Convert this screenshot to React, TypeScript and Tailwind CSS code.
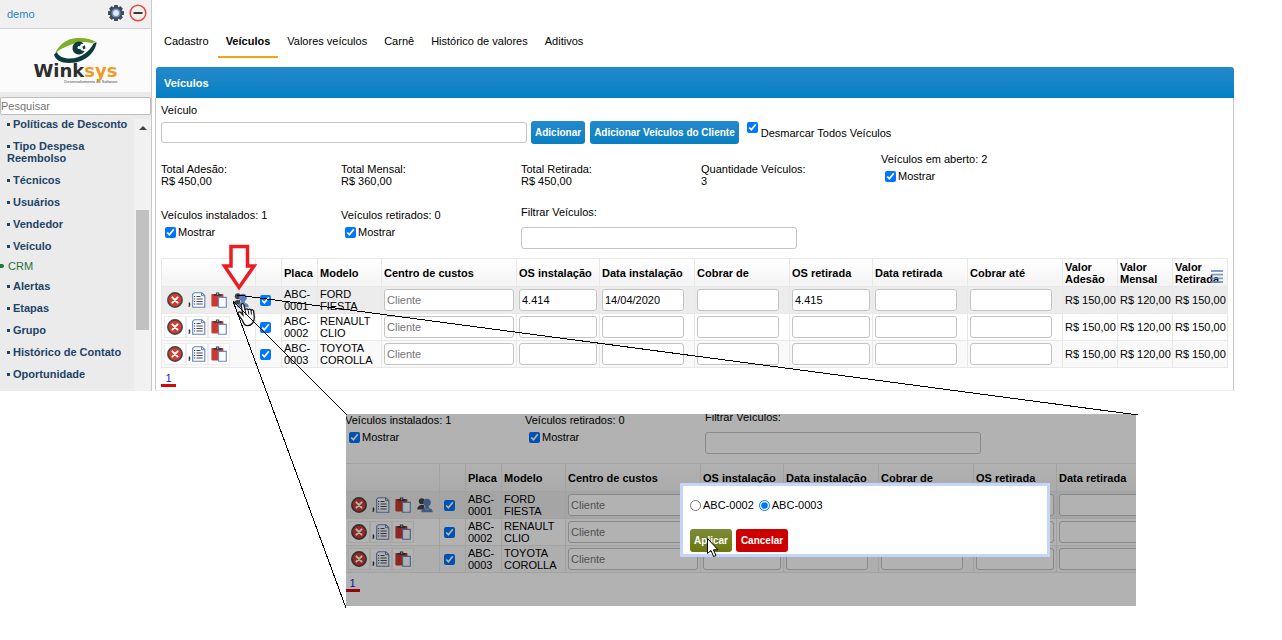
import React from "react";

type Vehicle = {
  plate: string;
  model: string;
  osInstall?: string;
  dateInstall?: string;
  osRemove?: string;
};

const vehicles: Vehicle[] = [
  { plate: "ABC-0001", model: "FORD FIESTA", osInstall: "4.414", dateInstall: "14/04/2020", osRemove: "4.415" },
  { plate: "ABC-0002", model: "RENAULT CLIO" },
  { plate: "ABC-0003", model: "TOYOTA COROLLA" },
];

const tabs = ["Cadastro", "Veículos", "Valores veículos", "Carnê", "Histórico de valores", "Aditivos"];

const menuTop = ["Políticas de Desconto", "Tipo Despesa Reembolso", "Técnicos", "Usuários", "Vendedor", "Veículo"];
const menuCrm = ["Alertas", "Etapas", "Grupo", "Histórico de Contato", "Oportunidade"];

function GearIcon() {
  return (
    <svg viewBox="0 0 16 16" className="size-4" aria-hidden="true">
      <g fill="#414a58">
        <circle cx="8" cy="8" r="6.4" />
        {[0, 45, 90, 135].map((a) => (
          <rect key={a} x="6" y="0" width="4" height="16" rx="0.4" transform={`rotate(${a} 8 8)`} />
        ))}
      </g>
      <circle cx="8" cy="8" r="4.6" fill="#6f8fc4" />
      <circle cx="8" cy="8" r="2.9" fill="#e3ebf9" />
    </svg>
  );
}

function MinusIcon() {
  return (
    <svg viewBox="0 0 18 18" className="size-[18px]" aria-hidden="true">
      <circle cx="9" cy="9" r="7.8" fill="#f6efee" stroke="#dc4a40" strokeWidth="1.5" />
      <rect x="4.5" y="8" width="9" height="2" fill="#3b3b3b" />
    </svg>
  );
}

function EyeLogo() {
  return (
    <svg viewBox="0 0 44 28" className="h-7 w-11" aria-hidden="true">
      <path d="M1 16.500C5 7.500 13 1.500 23 1c8-.4 14 1 19 4-2 .2-3 .6-3.600 1.400C33 4.500 25 4.200 18 7.200 11 10 6 12 1 16.500Z" fill="#7fae2a" />
      <path d="M42.500 5C42.500 12 34 26 15 26 7 26 1 22.500 0 17.500l3-2.500c1 4 6 6.500 13 6.500C27 21.500 36 14 39.500 6.500Z" fill="#0d3a3a" />
      <path d="M29.500 6.500a6.500 6.500 0 1 0 1.200 7.500l-3.200-.6-2-2.400 1-3.600Z" fill="#0d3a3a" />
      <path d="M28.300 9.800l2.600-1.600.6 3.200-2.200.8Z" fill="#0d3a3a" />
      <circle cx="25" cy="10.500" r="1.500" fill="#fbfbfb" />
    </svg>
  );
}

function DeleteIcon() {
  return (
    <svg viewBox="0 0 16 16" className="size-4" aria-hidden="true">
      <circle cx="8" cy="8" r="7.100" fill="#d63a2e" stroke="#4a4444" strokeWidth="1.700" />
      <path d="M5.400 5.400l5.200 5.200M10.600 5.400l-5.200 5.200" stroke="#fff" strokeWidth="2" strokeLinecap="round" />
    </svg>
  );
}

function ListIcon() {
  return (
    <svg viewBox="0 0 18 16" className="h-4 w-[18px]" aria-hidden="true">
      <path d="M1 10.500c1.300.3 1.500 2.700 0 4.500Z" fill="#333" stroke="#333" strokeWidth=".6" />
      <path d="M6.500.7h7.300L16.800 3.500v11.800H4.700V2.200Z" fill="#fafcff" stroke="#6482b4" strokeWidth="1.100" />
      <path d="M13.500.8v2.900h3.200" fill="none" stroke="#6482b4" />
      <path d="M8.500 4.500h4M8.500 7h6.200M8.500 9.500h6.200M8.500 12h6.200" stroke="#454b55" strokeWidth="1.100" />
      <path d="M6 4.500h1.200M6 7h1.200M6 9.500h1.200M6 12h1.200" stroke="#454b55" strokeWidth="1.200" />
    </svg>
  );
}

function PasteIcon() {
  return (
    <svg viewBox="0 0 16 16" className="size-4" aria-hidden="true">
      <rect x=".4" y="2" width="12" height="12.400" rx=".8" fill="#c83a32" />
      <path d="M2.700 4V2h2.200V.4h3.400V2h2.200v2Z" fill="#3d3d42" />
      <path d="M5.900 1.400h1.400v1.200H5.900Z" fill="#d8d8d8" />
      <path d="M7.600 5.400h7.700v9.900H7.600Z" fill="#fafcff" stroke="#6c88b5" strokeWidth="1.100" />
    </svg>
  );
}

function UsersIcon() {
  return (
    <svg viewBox="0 0 16 16" className="size-4" aria-hidden="true">
      <circle cx="4.800" cy="4.200" r="3" fill="#3f4247" />
      <path d="M.3 12.500c.2-3.500 2-3.600 3.600-4.500h3l1 4.500Z" fill="#3f4247" />
      <circle cx="10" cy="5.600" r="3.800" fill="#5b80bd" />
      <path d="M4.200 15.200c.3-3.200 2-3.600 4-4.400V9h3.600v1.800c2 .8 3.800 1.200 4 4.400Z" fill="#5b80bd" />
      <path d="M7.600 11.200c1.200 1.600 3.600 1.600 4.800 0" fill="none" stroke="#b9cbe8" strokeWidth=".8" />
    </svg>
  );
}

function MenuIcon() {
  return (
    <svg viewBox="0 0 12 13" className="h-[13px] w-3" aria-hidden="true">
      <path d="M0 1h12M0 4.700h12M0 8.400h12M0 12h12" stroke="#6f8ac6" strokeOpacity=".85" strokeWidth="1.800" />
    </svg>
  );
}

function ShowCheck() {
  return (
    <label className="mt-[5px] flex h-3 items-center gap-[2px] pl-1">
      <input type="checkbox" defaultChecked className="size-[11px]" />
      Mostrar
    </label>
  );
}

function Field({ label, value, placeholder }: { label: string; value?: string; placeholder?: string }) {
  return (
    <input
      type="text"
      aria-label={label}
      defaultValue={value}
      placeholder={placeholder}
      className="block h-[22px] w-full rounded-[3px] border border-[#c4c4c4] bg-white px-[2px] text-[11px] placeholder:text-[#757575]"
    />
  );
}

function FilterRow() {
  return (
    <div className="grid grid-cols-[180px_180px_276px] items-start">
      <div className="pt-[3px]">
        <p>Veículos instalados: 1</p>
        <ShowCheck />
      </div>
      <div className="pt-[3px]">
        <p>Veículos retirados: 0</p>
        <ShowCheck />
      </div>
      <label className="block">
        Filtrar Veículos:
        <input type="text" className="mt-[9px] block h-[22px] w-full rounded-[3px] border border-[#c4c4c4] px-[2px]" />
      </label>
    </div>
  );
}

const cell = "border border-[#e8e8e8] px-[2px]";

function VehicleTable() {
  return (
    <>
      <table className="mt-[9px] w-full table-fixed border-collapse">
        <colgroup>
          <col className="w-[94px]" />
          <col className="w-[26px]" />
          <col className="w-[36px]" />
          <col className="w-[64px]" />
          <col className="w-[135px]" />
          <col className="w-[83px]" />
          <col className="w-[95px]" />
          <col className="w-[95px]" />
          <col className="w-[83px]" />
          <col className="w-[95px]" />
          <col className="w-[95px]" />
          <col className="w-[55px]" />
          <col className="w-[55px]" />
          <col className="w-[55px]" />
        </colgroup>
        <thead>
          <tr className="h-7 bg-linear-to-b from-white to-[#f3f3f3] text-left">
            <td className={cell} />
            <td className={cell} />
            {["Placa", "Modelo", "Centro de custos", "OS instalação", "Data instalação", "Cobrar de", "OS retirada", "Data retirada", "Cobrar até", "Valor Adesão", "Valor Mensal"].map((h) => (
              <th key={h} className={cell}>
                {h}
              </th>
            ))}
            <th className="relative border border-[#e8e8e8] px-[2px]">
              Valor Retirada
              <button type="button" aria-label="Colunas" className="absolute right-[4px] bottom-[3px]">
                <MenuIcon />
              </button>
            </th>
          </tr>
        </thead>
        <tbody>
          {vehicles.map((v, i) => {
            const box = i === 0 ? "flex h-[22px] w-[22px] items-center justify-center" : "flex h-[22px] w-[22px] items-center justify-center border border-[#ececec] bg-white";
            return (
              <tr key={v.plate} className={i === 0 ? "h-[27px] bg-[#ececec]" : i === 1 ? "h-[27px] bg-white" : "h-[27px] bg-[#f9f9f9]"}>
                <td className={cell}>
                  <div className="flex">
                    <button type="button" aria-label="Excluir" className={box}>
                      <DeleteIcon />
                    </button>
                    <button type="button" aria-label="Detalhes" className={box}>
                      <ListIcon />
                    </button>
                    <button type="button" aria-label="Copiar" className={box}>
                      <PasteIcon />
                    </button>
                    {i === 0 && (
                      <button type="button" aria-label="Replicar" className={box}>
                        <UsersIcon />
                      </button>
                    )}
                  </div>
                </td>
                <td className={cell}>
                  <input type="checkbox" defaultChecked aria-label={`Selecionar ${v.plate}`} className="ml-[2px] block size-[11px]" />
                </td>
                <td className={cell}>{v.plate}</td>
                <td className={cell}>{v.model}</td>
                <td className={cell}>
                  <Field label="Centro de custos" placeholder="Cliente" />
                </td>
                <td className={cell}>
                  <Field label="OS instalação" value={v.osInstall} />
                </td>
                <td className="border border-[#e8e8e8] pr-[10px] pl-[2px]">
                  <Field label="Data instalação" value={v.dateInstall} />
                </td>
                <td className="border border-[#e8e8e8] pr-[10px] pl-[2px]">
                  <Field label="Cobrar de" />
                </td>
                <td className={cell}>
                  <Field label="OS retirada" value={v.osRemove} />
                </td>
                <td className="border border-[#e8e8e8] pr-[10px] pl-[2px]">
                  <Field label="Data retirada" />
                </td>
                <td className="border border-[#e8e8e8] pr-[10px] pl-[2px]">
                  <Field label="Cobrar até" />
                </td>
                {["R$ 150,00", "R$ 120,00", "R$ 150,00"].map((p, n) => (
                  <td key={n} className="border border-[#e8e8e8] px-[2px] text-right whitespace-nowrap">
                    {p}
                  </td>
                ))}
              </tr>
            );
          })}
        </tbody>
      </table>
      <a href="#pagina-1" className="mt-1 block w-[15px] border-b-3 border-[#d40a0a] text-center text-[#1414e0]">
        1
      </a>
    </>
  );
}

function MenuItem({ text }: { text: string }) {
  return (
    <li>
      <a href="#menu" className="block py-[5px] pl-[7px] font-bold text-[#1d4467]">
        <span className="mr-[3px] mb-[2px] inline-block size-[3px] bg-[#1d4467]" />
        {text}
      </a>
    </li>
  );
}

function Sidebar() {
  return (
    <aside className="flex w-[152px] shrink-0 flex-col border-r border-[#c8c8c8] bg-[#ebebeb]">
      <div className="flex h-[29px] items-center border-b border-[#d2d2d2] bg-[#f0f0f0] pr-1 pl-[7px]">
        <a href="#demo" className="flex-1 text-[#2b84c0]">
          demo
        </a>
        <button type="button" aria-label="Configurações" className="mr-[5px] mb-[3px]">
          <GearIcon />
        </button>
        <button type="button" aria-label="Recolher" className="mb-[3px]">
          <MinusIcon />
        </button>
      </div>
      <div className="flex h-[63px] flex-col items-center bg-[#fbfbfb] pt-2">
        <EyeLogo />
        <div className="-mt-[2px] font-['DejaVu_Sans',sans-serif] text-[18px] leading-[16px] font-bold text-[#2d2d2d]">
          Wink<span className="text-[#f29a1f]">sys</span>
        </div>
        <div className="w-[84px] text-right text-[4px] leading-[5px] text-[#444]">Desenvolvimento de Software</div>
      </div>
      <div className="pt-[5px]">
        <input
          type="text"
          aria-label="Pesquisar"
          placeholder="Pesquisar"
          className="block h-[18px] w-full rounded-[2px] border border-[#bdbdbd] bg-white px-0 placeholder:text-[#757575]"
        />
      </div>
      <div className="-mt-[2px] flex flex-1">
        <ul className="flex-1 overflow-hidden">
          {menuTop.map((m) => (
            <MenuItem key={m} text={m} />
          ))}
          <li className="flex h-[18px] items-center">
            <span className="mr-1 h-1 w-1 rounded-r-full bg-[#1b7a3a]" />
            <a href="#crm" className="text-[#1f7038]">
              CRM
            </a>
          </li>
          {menuCrm.map((m) => (
            <MenuItem key={m} text={m} />
          ))}
        </ul>
        <div className="mt-[6px] flex w-[17px] flex-col items-center bg-[#f1f1f1] pt-[7px]" aria-hidden="true">
          <svg viewBox="0 0 8 4" className="h-1 w-2">
            <path d="M0 4L4 0l4 4Z" fill="#444" />
          </svg>
          <div className="mt-[80px] h-[120px] w-[13px] bg-[#c1c1c1]" />
        </div>
      </div>
    </aside>
  );
}

function Total({ label, value }: { label: string; value: string }) {
  return (
    <div className="pt-[10px]">
      <p>{label}</p>
      <p>{value}</p>
    </div>
  );
}

const blueButton =
  "h-[23px] rounded-[3px] bg-linear-to-b from-[#2389ca] to-[#0680c3] px-1 text-[10px] font-bold whitespace-nowrap text-white";

function ReplicaDialog() {
  return (
    <div role="dialog" aria-label="Replicar veículo" className="absolute top-[69px] left-[334px] h-[74px] w-[370px] border-3 border-[#c3d5f8] bg-white px-[7px] pt-[13px]">
      <div className="flex items-center gap-[5px]">
        <label className="flex items-center gap-[2px]">
          <input type="radio" name="replica" className="size-[11px]" />
          ABC-0002
        </label>
        <label className="flex items-center gap-[2px]">
          <input type="radio" name="replica" defaultChecked className="size-[11px]" />
          ABC-0003
        </label>
      </div>
      <div className="mt-[18px] flex gap-1">
        <button type="button" className="h-[23px] w-[42px] rounded-[3px] bg-linear-to-b from-[#7d8b36] to-[#6b7809] text-[10px] font-bold text-white">
          Aplicar
        </button>
        <button type="button" className="h-[23px] w-[52px] rounded-[3px] bg-[#cc0000] text-[10px] font-bold text-white">
          Cancelar
        </button>
      </div>
    </div>
  );
}

function Annotations() {
  return (
    <svg viewBox="0 0 1282 640" className="pointer-events-none absolute top-0 left-0 h-[640px] w-[1282px]" aria-hidden="true">
      <path d="M231 246.500h16.500V266H254L239 287.500 224.500 266H231Z" fill="#fff" stroke="#ea1c24" strokeWidth="3.500" />
      <path
        d="M242.500 320.500c-1.500-2.500-3.500-4.500-4.300-6.500-.8-2 1.300-2.800 2.700-1.200l2 2.200-1.700-9.500c-.2-2.200 2.300-2.400 2.800-.4l1.200 5.200c.2-1.800 2.600-1.900 3 0 .4-1.600 2.500-1.500 2.900.3.600-1.400 2.300-1 2.500.6l.7 6c.2 4.300-2.300 8.300-6.800 8.500-2.500.1-4-1.800-5-5.200Z"
        fill="#fff"
        stroke="#15151f"
        strokeWidth="1.300"
      />
      <path d="M245.300 310.500l.8 4.500M248.300 310.800l.6 3.700M251.200 311.500l.3 3" stroke="#15151f" />
      <g stroke="#000" strokeWidth="1" shapeRendering="crispEdges">
        <path d="M237 295L1138 415" />
        <path d="M233 301L347 415" />
        <path d="M233 301L346 608" />
      </g>
      <path d="M707.500 538.500v15l3.500-3 2.600 6 2.400-1-2.600-5.700h4.600Z" fill="#fff" stroke="#000" />
    </svg>
  );
}

export default function App() {
  return (
    <div className="relative overflow-hidden bg-white font-['Liberation_Sans',Arial,sans-serif] text-[11px] leading-[12px] text-black">
      <div className="flex">
        <Sidebar />
        <main className="mr-12 ml-[3px] flex min-w-0 flex-1 flex-col">
          <nav className="mb-[9px] flex gap-px pt-[25px] pl-px">
            {tabs.map((t) => (
              <a
                key={t}
                href="#aba"
                className={
                  t === "Veículos"
                    ? "flex h-[33px] items-center border-b-2 border-[#f2a516] px-2 font-bold"
                    : "flex h-[33px] items-center border-b-2 border-transparent px-2"
                }
              >
                {t}
              </a>
            ))}
          </nav>
          <h1 className="ml-px flex h-[31px] items-center rounded-t-[3px] bg-linear-to-b from-[#2389ca] to-[#0080c4] px-2 font-bold text-white">
            Veículos
          </h1>
          <section className="flex-1 border-x border-b border-x-[#c8c8c8] border-b-[#eeeeee] px-[5px] pt-[6px] pb-[3px]">
            <label htmlFor="veiculo" className="block">
              Veículo
            </label>
            <div className="mt-[5px] flex items-center">
              <input id="veiculo" type="text" className="h-[21px] w-[366px] rounded-[3px] border border-[#c4c4c4] px-[2px]" />
              <button type="button" className={`ml-1 ${blueButton}`}>
                Adicionar
              </button>
              <button type="button" className={`ml-[5px] ${blueButton}`}>
                Adicionar Veículos do Cliente
              </button>
              <label className="ml-2 flex items-center gap-[3px]">
                <input type="checkbox" defaultChecked className="mb-[10px] size-[11px]" />
                Desmarcar Todos Veículos
              </label>
            </div>
            <div className="mt-[9px] grid grid-cols-[180px_180px_180px_180px_180px]">
              <Total label="Total Adesão:" value="R$ 450,00" />
              <Total label="Total Mensal:" value="R$ 360,00" />
              <Total label="Total Retirada:" value="R$ 450,00" />
              <Total label="Quantidade Veículos:" value="3" />
              <div>
                <p>Veículos em aberto: 2</p>
                <ShowCheck />
              </div>
            </div>
            <div className="mt-[19px]">
              <FilterRow />
            </div>
            <VehicleTable />
          </section>
        </main>
      </div>
      <section className="relative mt-[23px] mb-[34px] ml-[346px] h-[192px] w-[790px] overflow-hidden">
        <div className="-mt-[3px] -ml-px w-[1067px]">
          <FilterRow />
          <VehicleTable />
        </div>
        <div className="absolute inset-0 bg-black/30" />
        <ReplicaDialog />
      </section>
      <Annotations />
    </div>
  );
}
